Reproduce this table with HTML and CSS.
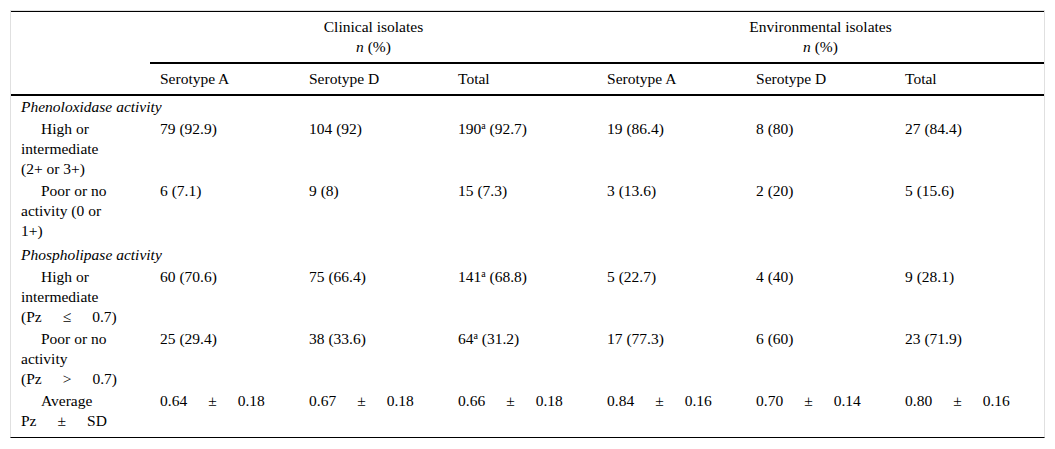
FILE: index.html
```html
<!DOCTYPE html>
<html>
<head>
<meta charset="utf-8">
<link rel="stylesheet" href="styles.css">
</head>
<body>
<div class="wrap">
<table class="tbl">
  <colgroup>
    <col class="c-label">
    <col class="c-data"><col class="c-data"><col class="c-data">
    <col class="c-data"><col class="c-data"><col class="c-data">
  </colgroup>
  <thead>
    <tr class="group-row">
      <th class="blank" rowspan="2"></th>
      <th class="group" colspan="3">Clinical isolates<br><i>n</i> (%)</th>
      <th class="group" colspan="3">Environmental isolates<br><i>n</i> (%)</th>
    </tr>
    <tr class="sub-row">
      <th>Serotype A</th>
      <th>Serotype D</th>
      <th>Total</th>
      <th>Serotype A</th>
      <th>Serotype D</th>
      <th>Total</th>
    </tr>
  </thead>
  <tbody>
    <tr class="section">
      <td colspan="7"><i>Phenoloxidase activity</i></td>
    </tr>
    <tr>
      <td class="label"><span class="ind"></span>High or intermediate (2+ or 3+)</td>
      <td>79 (92.9)</td>
      <td>104 (92)</td>
      <td>190<sup>a</sup> (92.7)</td>
      <td>19 (86.4)</td>
      <td>8 (80)</td>
      <td>27 (84.4)</td>
    </tr>
    <tr>
      <td class="label"><span class="ind"></span>Poor or no activity (0 or 1+)</td>
      <td>6 (7.1)</td>
      <td>9 (8)</td>
      <td>15 (7.3)</td>
      <td>3 (13.6)</td>
      <td>2 (20)</td>
      <td>5 (15.6)</td>
    </tr>
    <tr class="section section-next">
      <td colspan="7"><i>Phospholipase activity</i></td>
    </tr>
    <tr>
      <td class="label"><span class="ind"></span>High or intermediate <span class="nw">(Pz<span class="op">≤</span>0.7)</span></td>
      <td>60 (70.6)</td>
      <td>75 (66.4)</td>
      <td>141<sup>a</sup> (68.8)</td>
      <td>5 (22.7)</td>
      <td>4 (40)</td>
      <td>9 (28.1)</td>
    </tr>
    <tr>
      <td class="label"><span class="ind"></span>Poor or no activity <span class="nw">(Pz<span class="op">&gt;</span>0.7)</span></td>
      <td>25 (29.4)</td>
      <td>38 (33.6)</td>
      <td>64<sup>a</sup> (31.2)</td>
      <td>17 (77.3)</td>
      <td>6 (60)</td>
      <td>23 (71.9)</td>
    </tr>
    <tr>
      <td class="label"><span class="ind"></span>Average <span class="nw">Pz<span class="op">±</span>SD</span></td>
      <td class="nw">0.64<span class="op">±</span>0.18</td>
      <td class="nw">0.67<span class="op">±</span>0.18</td>
      <td class="nw">0.66<span class="op">±</span>0.18</td>
      <td class="nw">0.84<span class="op">±</span>0.16</td>
      <td class="nw">0.70<span class="op">±</span>0.14</td>
      <td class="nw">0.80<span class="op">±</span>0.16</td>
    </tr>
  </tbody>
</table>
</div>
</body>
</html>
```
FILE: styles.css
```css
html, body {
  margin: 0;
  padding: 0;
  background: #fff;
}

body {
  font-family: "Liberation Serif", "Times New Roman", serif;
  font-size: 15.5px;
  line-height: 20px;
  color: #000;
}

.wrap {
  margin: 10px 0 0 10px;
  width: 1033px;
  border-top: 1px solid #e0e0e0;
  border-left: 1px solid #e0e0e0;
  border-right: 1px solid #e0e0e0;
  border-bottom: 1px solid #000;
  padding-bottom: 5px;
}

.tbl {
  width: 1033px;
  border-collapse: collapse;
  table-layout: fixed;
  border-top: 1px solid #000;
}

.c-label { width: 139px; }
.c-data { width: 149px; }

.tbl th {
  font-weight: normal;
  text-align: left;
  vertical-align: top;
  padding: 5px 10px;
}

.tbl th.group {
  text-align: center;
  border-bottom: 2px solid #000;
}

.tbl thead tr.sub-row {
  border-bottom: 2px solid #000;
}

.tbl thead th.blank {
  border-bottom: 2px solid #000;
}

.tbl td {
  vertical-align: top;
  text-align: left;
  padding: 1px 10px;
}

.tbl tr.section-next td {
  padding-top: 3px;
}

.tbl td.label {
  padding-right: 33px;
}

.ind {
  display: inline-block;
  width: 20px;
}

.nw {
  white-space: nowrap;
}

.op {
  margin: 0 21px;
}

sup {
  font-size: 10px;
  line-height: 0;
  vertical-align: 5px;
}
```
